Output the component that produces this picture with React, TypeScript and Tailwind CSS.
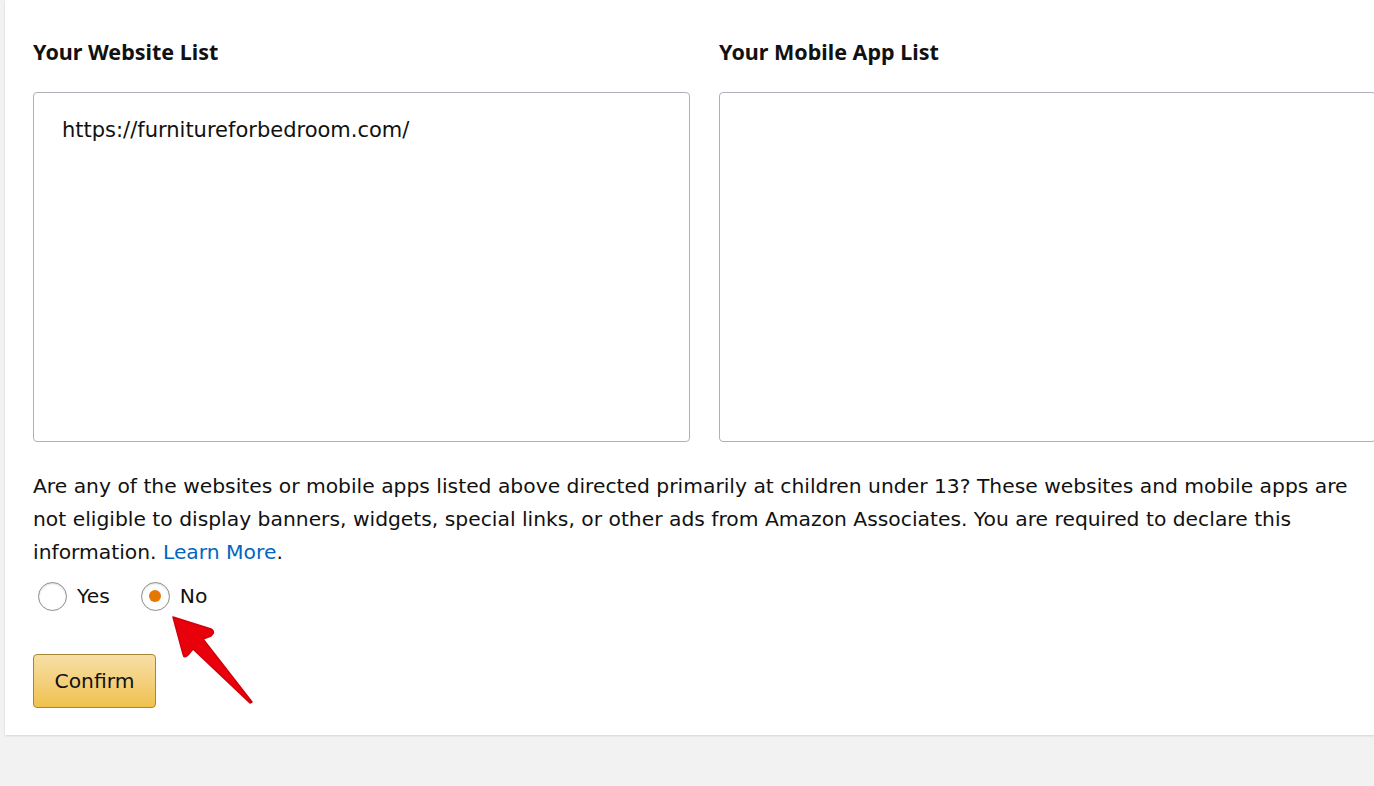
import React from "react";

export default function App() {
  return (
    <div className="w-[1374px] h-[786px] overflow-hidden bg-[#f2f2f2] pl-[5px]" style={{ fontFamily: '"DejaVu Sans", Arial, sans-serif' }}>
      <div className="relative bg-white w-[1400px] h-[735px] shadow-[0_1px_2px_rgba(0,0,0,0.12)] pl-[28px] pt-[34px] text-[#111]">
        <div className="grid grid-cols-[657px_657px] gap-x-[29px]">
          <div>
            <h2 className="text-[21.5px] font-bold leading-[36px] text-[#111]" style={{ fontFamily: '"Noto Sans", sans-serif' }}>Your Website List</h2>
            <div className="mt-[22px] h-[350px] border border-[#adb1b8] rounded-[4px] px-[28px] pt-[22px] text-[21px] leading-[30px]">
              https://furnitureforbedroom.com/
            </div>
          </div>
          <div>
            <h2 className="text-[21.5px] font-bold leading-[36px] text-[#111]" style={{ fontFamily: '"Noto Sans", sans-serif' }}>Your Mobile App List</h2>
            <div className="mt-[22px] h-[350px] border border-[#adb1b8] rounded-[4px]"></div>
          </div>
        </div>
        <p className="mt-[28px] w-[1335px] text-[20.3px] leading-[33px]">
          Are any of the websites or mobile apps listed above directed primarily at children under 13? These websites and mobile apps are not eligible to display banners, widgets, special links, or other ads from Amazon Associates. You are required to declare this information. <span className="text-[#0066c0]">Learn More</span>.
        </p>
        <div className="flex items-center mt-[12px] h-[30px] text-[20.3px]">
          <span className="ml-[5px] w-[29px] h-[29px] rounded-full border-[1.5px] border-[#8d8d8d] bg-white shadow-[inset_0_1px_2px_rgba(0,0,0,0.15)]"></span>
          <span className="ml-[10px]">Yes</span>
          <span className="ml-[31px] w-[29px] h-[29px] rounded-full border-[1.5px] border-[#8d8d8d] bg-white flex items-center justify-center shadow-[inset_0_1px_2px_rgba(0,0,0,0.15)]">
            <span className="w-[12px] h-[12px] rounded-full bg-[#e77600]"></span>
          </span>
          <span className="ml-[10px]">No</span>
        </div>
        <button className="mt-[43px] w-[123px] h-[54px] rounded-[4px] border border-[#a88734] bg-gradient-to-b from-[#f7dfa5] to-[#f0c14b] text-[20.3px] text-[#111] flex items-center justify-center">
          Confirm
        </button>
        <svg className="absolute left-[160px] top-[608px]" width="100" height="100" viewBox="0 0 100 100">
          <path d="M8 9 L46 21 Q51 24 46 28 L38 31 L87 94 L85 95 L28 41 L23 47 Q19 51 18 46 Z" fill="#e8000b" stroke="#d0000c" strokeWidth="1.5" strokeLinejoin="round" />
        </svg>
      </div>
    </div>
  );
}
